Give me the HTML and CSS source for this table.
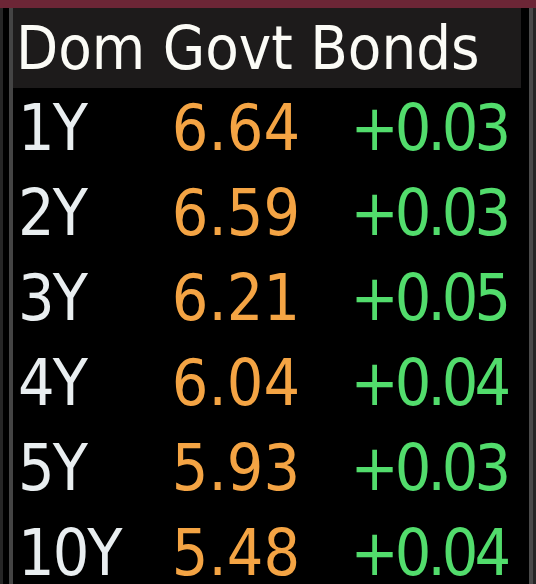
FILE: index.html
```html
<!DOCTYPE html>
<html lang="en">
<head>
    <meta charset="UTF-8">
    <meta name="viewport" content="width=device-width, initial-scale=1.0">
    <title>Dom Govt Bonds</title>
    <link rel="stylesheet" href="styles.css">
</head>
<body>
    <div class="top-bar"></div>
    <div class="panel">
        <div class="inner">
            <h1 class="title">Dom Govt Bonds</h1>
            <div class="bond-table">
                <div class="tenor">1Y</div><div class="yield">6.64</div><div class="change">+0.03</div>
                <div class="tenor">2Y</div><div class="yield">6.59</div><div class="change">+0.03</div>
                <div class="tenor">3Y</div><div class="yield">6.21</div><div class="change">+0.05</div>
                <div class="tenor">4Y</div><div class="yield">6.04</div><div class="change">+0.04</div>
                <div class="tenor">5Y</div><div class="yield">5.93</div><div class="change">+0.03</div>
                <div class="tenor">10Y</div><div class="yield">5.48</div><div class="change">+0.04</div>
            </div>
        </div>
    </div>
</body>
</html>
```

FILE: styles.css
```css
html, body {
    margin: 0;
    height: 100%;
    overflow: hidden;
}
body {
    background-color: #262626;
    font-family: "DejaVu Sans", Verdana, sans-serif;
    font-stretch: semi-condensed;
}
.top-bar {
    height: 8px;
    background-color: #6c2636;
}
.panel {
    margin-left: 3px;
    width: 520px;
    height: 576px;
    padding-left: 6px;
    background-color: #000;
    border-right: 4px solid #4a4a4a;
}
.inner {
    height: 100%;
    margin-right: 8px;
    border-left: 4px solid #444;
}
.title {
    margin: 0;
    height: 80px;
    line-height: 80px;
    padding-left: 3px;
    background-color: #1d1b1b;
    color: #fbfbf6;
    font-size: 61px;
    font-weight: normal;
    white-space: nowrap;
}
.bond-table {
    display: grid;
    grid-template-columns: 127px 160px 207px;
    grid-auto-rows: 85px;
    font-size: 64px;
    line-height: 60px;
}
.bond-table div {
    padding-top: 10px;
}
.tenor {
    padding-left: 5px;
    color: #e9eef0;
    letter-spacing: -2px;
}
.yield {
    color: #f4a444;
    text-align: right;
}
.change {
    color: #52dc6c;
    text-align: right;
    letter-spacing: -4px;
}
```
